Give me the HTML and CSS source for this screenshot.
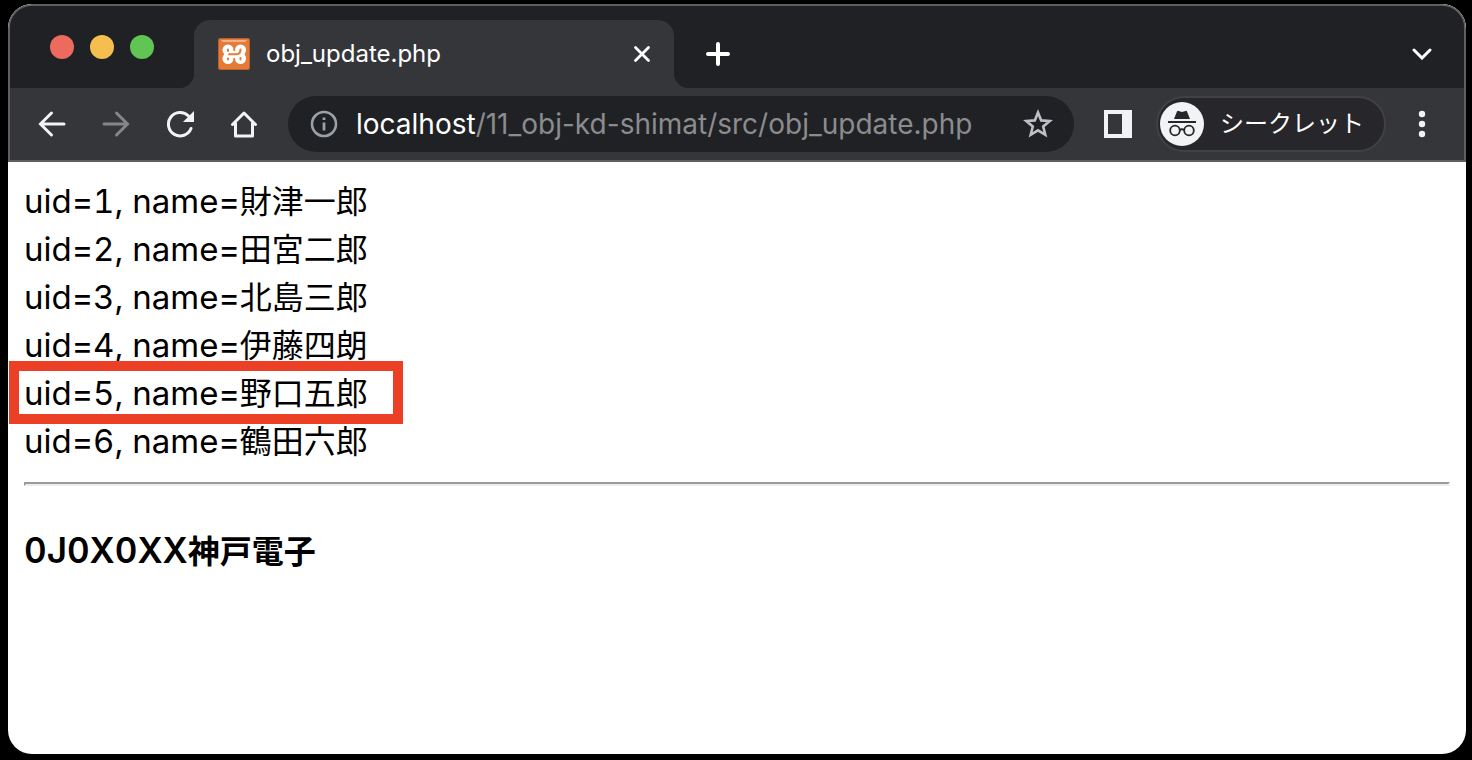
FILE: index.html
```html
<!DOCTYPE html>
<html lang="ja">
<head>
<meta charset="utf-8">
<title>obj_update.php</title>
<link rel="stylesheet" href="styles.css">
</head>
<body>
<div class="window">
  <header class="chrome">
    <div class="tabstrip">
      <div class="lights">
        <button class="light light-close" aria-label="閉じる"></button>
        <button class="light light-min" aria-label="最小化"></button>
        <button class="light light-max" aria-label="最大化"></button>
      </div>
      <div class="tab">
        <svg class="favicon" viewBox="0 0 32 32" aria-hidden="true">
          <rect width="32" height="32" rx="2" fill="#b9602c"/>
          <rect x="1" y="1" width="30" height="30" rx="2" fill="#e37c38"/>
          <path d="M3 2H29L27 4H5Z" fill="#f3b189"/>
          <g fill="#fff"><circle cx="10" cy="12" r="5.500"/><circle cx="22.500" cy="12" r="5.500"/><circle cx="10" cy="20.500" r="5.500"/><circle cx="22.500" cy="20.500" r="5.500"/><path d="M6 13H26.500V20H6Z"/></g>
          <path d="M10 11.500V13M10 20.500V21.500M22.500 20V21.500M11 16.300H18.500Q22.500 16 22.500 11.500" fill="none" stroke="#e37c38" stroke-width="2" stroke-linecap="round"/>
        </svg>
        <span class="tab-title">obj_update.php</span>
        <button class="icon-btn tab-close" aria-label="タブを閉じる">
          <svg width="20" height="20" viewBox="0 0 20 20"><path d="M3.500 3.500L16.500 16.500M16.500 3.500L3.500 16.500" stroke="#fff" stroke-width="2.800" stroke-linecap="round"/></svg>
        </button>
      </div>
      <button class="icon-btn new-tab" aria-label="新しいタブ">
        <svg width="24" height="24" viewBox="0 0 24 24"><path d="M12 2V22M2 12H22" stroke="#fff" stroke-width="4" stroke-linecap="round"/></svg>
      </button>
      <button class="icon-btn tab-search" aria-label="タブを検索">
        <svg width="20" height="12" viewBox="0 0 20 12"><path d="M2 2L10 10L18 2" fill="none" stroke="#fff" stroke-width="3"  stroke-linecap="round"/></svg>
      </button>
    </div>
    <div class="toolbar">
      <nav class="nav">
        <button class="icon-btn tool" aria-label="戻る">
          <svg width="28" height="28" viewBox="0 0 28 28"><path d="M26 14H3M13.500 3L2.500 14L13.500 25" fill="none" stroke="#f1f3f4" stroke-width="3" stroke-linecap="round"/></svg>
        </button>
        <button class="icon-btn tool" aria-label="進む">
          <svg width="28" height="28" viewBox="0 0 28 28"><path d="M2 14H25M14.500 3L25.500 14L14.500 25" fill="none" stroke="#85868a" stroke-width="3" stroke-linecap="round"/></svg>
        </button>
        <button class="icon-btn tool" aria-label="再読み込み">
          <svg width="28" height="28" viewBox="0 0 28 28"><path d="M25 18.500A11.700 11.700 0 1 1 22.500 6" fill="none" stroke="#f1f3f4" stroke-width="3" stroke-linecap="round"/><path d="M28 1V12H17Z" fill="#f1f3f4"/></svg>
        </button>
        <button class="icon-btn tool" aria-label="ホーム">
          <svg width="28" height="28" viewBox="0 0 28 28"><path d="M2.500 14.500L14 3L25.500 14.500M5.500 13V26H22.500V13" fill="none" stroke="#f1f3f4" stroke-width="3" stroke-linecap="round" stroke-linejoin="round"/></svg>
        </button>
      </nav>
      <div class="omnibox">
        <svg class="info" width="28" height="28" viewBox="0 0 28 28" aria-hidden="true"><circle cx="14" cy="14" r="12" fill="none" stroke="#9aa0a6" stroke-width="2.600"/><path d="M14 12.500V20.500M14 7.500V10" stroke="#9aa0a6" stroke-width="2.800"/></svg>
        <div class="url" role="textbox" contenteditable="true" spellcheck="false" aria-label="アドレス"><span class="host">localhost</span>/11_obj-kd-shimat/src/obj_update.php</div>
        <button class="icon-btn star" aria-label="ブックマークに追加">
          <svg width="30" height="30" viewBox="0 0 30 30"><path d="M15 3.500L18.200 11.400L26.700 12L20.200 17.500L22.300 25.800L15 21.300L7.700 25.800L9.800 17.500L3.300 12L11.800 11.400Z" fill="none" stroke="#bdc1c6" stroke-width="2.600"/></svg>
        </button>
      </div>
      <button class="icon-btn tool" aria-label="サイドパネル">
        <svg width="28" height="28" viewBox="0 0 28 28"><path d="M0 0H28V28H0ZM4 4V24H18V4Z" fill="#f1f3f4" fill-rule="evenodd"/></svg>
      </button>
      <button class="profile">
        <svg width="44" height="44" viewBox="0 0 44 44" aria-hidden="true"><circle cx="22" cy="22" r="22" fill="#f1f3f4"/><path d="M14 17L17 9.500Q17.500 8.500 18.500 9L22 10L25.500 9Q26.500 8.500 27 9.500L30 17ZM8 19H36V21H8Z" fill="#27262b"/><g fill="none" stroke="#27262b" stroke-width="1.800"><circle cx="15" cy="28.500" r="4.800"/><circle cx="29" cy="28.500" r="4.800"/><path d="M19.800 28Q22 26.500 24.200 28"/></g></svg>
        <span>シークレット</span>
      </button>
      <button class="icon-btn tool menu" aria-label="メニュー">
        <svg width="8" height="28" viewBox="0 0 8 28" fill="#f1f3f4"><circle cx="4" cy="4" r="3.200"/><circle cx="4" cy="14" r="3.200"/><circle cx="4" cy="24" r="3.200"/></svg>
      </button>
    </div>
  </header>
  <main class="page">
    <div class="row"><span class="latin">uid=1, name=</span>財津一郎</div>
    <div class="row"><span class="latin">uid=2, name=</span>田宮二郎</div>
    <div class="row"><span class="latin">uid=3, name=</span>北島三郎</div>
    <div class="row"><span class="latin">uid=4, name=</span>伊藤四朗</div>
    <div class="row marked"><span class="latin">uid=5, name=</span>野口五郎</div>
    <div class="row"><span class="latin">uid=6, name=</span>鶴田六郎</div>
    <hr class="rule">
    <h1 class="signature"><span class="code">0J0X0XX</span>神戸電子</h1>
  </main>
</div>
</body>
</html>
```

FILE: styles.css
```css
* { box-sizing: border-box; }

body {
  margin: 0;
  min-height: 100vh;
  display: flex;
  padding: 4px 6px 6px 8px;
  background: #000;
  font-family: Inter, "Noto Sans CJK JP", sans-serif;
}

button {
  border: 0;
  padding: 0;
  background: none;
  color: inherit;
  font: inherit;
}

.window {
  flex: 1;
  display: flex;
  flex-direction: column;
  border-radius: 24px;
  overflow: hidden;
  background: #fff;
}

.chrome {
  border: 2px solid #5f5f63;
  border-radius: 24px 24px 0 0;
  background: #35363a;
  color: #fff;
  overflow: hidden;
}

.tabstrip {
  display: flex;
  align-items: center;
  height: 82px;
  padding-right: 30px;
  background: #202124;
}

.lights {
  display: flex;
  gap: 16px;
  padding: 0 40px;
  align-self: flex-start;
  margin-top: 29px;
}

.light {
  width: 24px;
  height: 24px;
  border-radius: 50%;
}

.light-close { background: #ed6a5e; }
.light-min { background: #f5bf4f; }
.light-max { background: #61c554; }

.tab {
  position: relative;
  display: flex;
  align-items: center;
  align-self: flex-end;
  width: 480px;
  height: 68px;
  padding: 0 22px 0 24px;
  border-radius: 16px 16px 0 0;
  background: #35363a;
}

.tab::before,
.tab::after {
  content: "";
  position: absolute;
  bottom: 0;
  width: 16px;
  height: 16px;
}

.tab::before {
  right: 100%;
  background: radial-gradient(circle at 0 0, #202124 16px, #35363a 17px);
}

.tab::after {
  left: 100%;
  background: radial-gradient(circle at 100% 0, #202124 16px, #35363a 17px);
}

.favicon {
  width: 32px;
  height: 32px;
  margin-right: 16px;
}

.tab-title {
  flex: 1;
  padding-bottom: 2px;
  font-size: 24px;
}

.icon-btn {
  display: flex;
  align-items: center;
  justify-content: center;
}

.new-tab { margin-left: 32px; }
.tab-search { margin-left: auto; width: 24px; height: 24px; }

.new-tab,
.tab-search { margin-top: 14px; }

.toolbar {
  display: flex;
  align-items: center;
  height: 72px;
  padding: 0 10px;
}

.nav { display: flex; }

.tool {
  width: 64px;
  height: 56px;
}

.omnibox {
  flex: 1;
  min-width: 0;
  display: flex;
  align-items: center;
  height: 56px;
  margin: 0 12px;
  padding: 0 21px 0 22px;
  border-radius: 28px;
  background: #202124;
}

.url {
  flex: 1;
  min-width: 0;
  margin-left: 18px;
  font-size: 28px;
  white-space: nowrap;
  color: #8b8c8f;
}

.host { color: #fff; }

.profile {
  display: flex;
  align-items: center;
  gap: 16px;
  height: 56px;
  margin: 0 4px 0 6px;
  padding: 0 20px 0 2px;
  border: 2px solid #414045;
  border-radius: 28px;
  background: #27262b;
  font-size: 24px;
  line-height: 32px;
}

.page {
  flex: 1;
  padding: 16px;
  color: #000;
  font-size: 32px;
  font-variant-numeric: tabular-nums;
  line-height: 48px;
}

.row { width: fit-content; }

.latin,
.code { line-height: 1; }

.latin { font-size: 33px; }

.marked { position: relative; }

.marked::after {
  content: "";
  position: absolute;
  inset: -9px -35px -6px -15px;
  border: 10px solid #ec4026;
}

.rule {
  margin: 16px 0 42px;
  border: 2px solid;
  border-color: #9a9a9a #eee #eee #9a9a9a;
}

.signature {
  margin: 0;
  font-size: 32px;
  font-weight: 700;
}

.code {
  font-size: 35px;
  font-weight: 600;
}
```
